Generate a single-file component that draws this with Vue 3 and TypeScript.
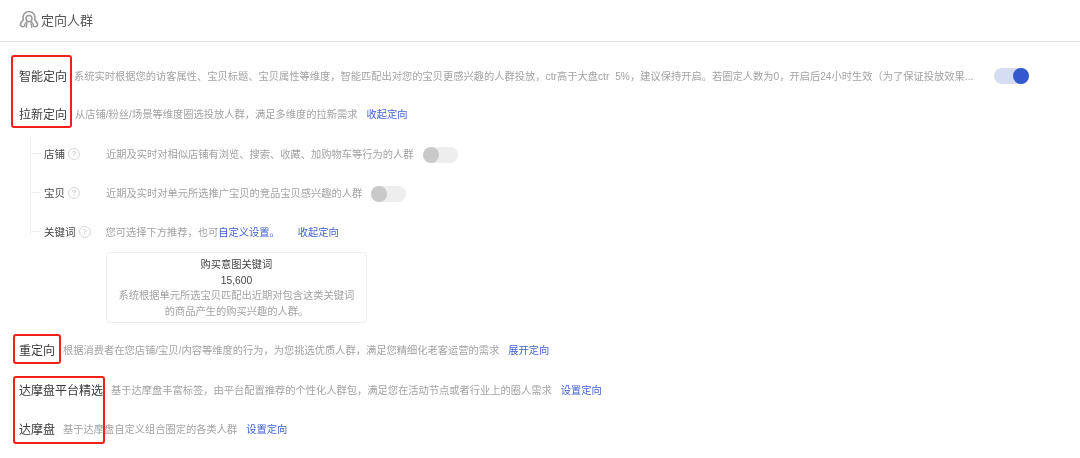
<script setup lang="ts">
interface SubRow { label: string; desc: string }
const subRows: SubRow[] = [
  { label: '店铺', desc: '近期及实时对相似店铺有浏览、搜索、收藏、加购物车等行为的人群' },
  { label: '宝贝', desc: '近期及实时对单元所选推广宝贝的竞品宝贝感兴趣的人群' },
]
</script>

<template>
  <div class="page">
    <header class="head">
      <svg class="logo" width="20" height="20" viewBox="0 0 20 20" fill="none" stroke="#999" stroke-width="1.5" stroke-linecap="round" stroke-linejoin="round">
        <path d="M4.4 9.6a6 6 0 1 1 11.2 0" />
        <path d="M7 8.4a3 3 0 0 1 6 0c0 1.9-1.4 3.3-3 3.3s-3-1.4-3-3.3z" />
        <path d="M4.4 9.6C2.6 11 1.5 12.6 1.3 15c.9 1.5 2.5 2 3.9 1.4.2-2 1.1-3.6 2.8-4.6" />
        <path d="M15.6 9.6c1.8 1.4 2.9 3 3.1 5.4-.9 1.5-2.5 2-3.9 1.4-.2-2-1.1-3.6-2.8-4.6" />
        <path d="M8 13.8c-.6 1-.8 2-.7 3.4M12 13.8c.6 1 .8 2 .7 3.4" />
      </svg>
      <span class="title">定向人群</span>
    </header>

    <section class="body">
      <div class="row first">
        <span class="label">智能定向</span>
        <span class="desc long">系统实时根据您的访客属性、宝贝标题、宝贝属性等维度，智能匹配出对您的宝贝更感兴趣的人群投放，ctr高于大盘ctr 5%，建议保持开启。若圈定人数为0，开启后24小时生效（为了保证投放效果...</span>
        <span class="toggle on"><i></i></span>
      </div>
      <div class="row">
        <span class="label">拉新定向</span>
        <span class="desc gap8">从店铺/粉丝/场景等维度圈选投放人群，满足多维度的拉新需求</span>
        <a class="link">收起定向</a>
      </div>

      <div class="tree">
        <div v-for="r in subRows" :key="r.label" class="sub">
          <span class="sub-label">{{ r.label }}</span>
          <span class="q">?</span>
          <span class="desc sub-desc">{{ r.desc }}</span>
          <span class="toggle off"><i></i></span>
        </div>
        <div class="sub">
          <span class="sub-label">关键词</span>
          <span class="q">?</span>
          <span class="desc kw-desc">您可选择下方推荐，也可<a class="link inline">自定义设置。</a></span>
          <a class="link kw-link">收起定向</a>
        </div>
      </div>

      <div class="card">
        <div class="card-title">购买意图关键词</div>
        <div class="card-num">15,600</div>
        <div class="card-text">系统根据单元所选宝贝匹配出近期对包含这类关键词<br />的商品产生的购买兴趣的人群。</div>
      </div>

      <div class="row re">
        <span class="label">重定向</span>
        <span class="desc gap8">根据消费者在您店铺/宝贝/内容等维度的行为，为您挑选优质人群，满足您精细化老客运营的需求</span>
        <a class="link">展开定向</a>
      </div>
      <div class="row pf">
        <span class="label">达摩盘平台精选</span>
        <span class="desc gap8">基于达摩盘丰富标签，由平台配置推荐的个性化人群包，满足您在活动节点或者行业上的圈人需求</span>
        <a class="link">设置定向</a>
      </div>
      <div class="row dm">
        <span class="label">达摩盘</span>
        <span class="desc gap8">基于达摩盘自定义组合圈定的各类人群</span>
        <a class="link">设置定向</a>
      </div>
    </section>

    <i class="red r1"></i>
    <i class="red r2"></i>
    <i class="red r3"></i>
  </div>
</template>

<style>
html, body { margin: 0; background: #fff; }
</style>

<style scoped>
.page {
  position: relative;
  width: 1080px;
  height: 458px;
  overflow: hidden;
  background: #fff;
  font-family: "Liberation Sans", "Noto Sans CJK SC", sans-serif;
  color: #333;
  text-spacing-trim: space-all;
  filter: blur(0.3px);
}
.head {
  display: flex;
  align-items: center;
  height: 39px;
  padding: 0 0 2px 19px;
  border-bottom: 1px solid #e8e8e8;
}
.logo { margin-right: 2px; }
.title { font-size: 13px; color: #555; }
.body { padding-left: 19px; }
.row {
  display: flex;
  align-items: center;
  height: 38px;
  white-space: nowrap;
}
.row.first { margin-top: 15px; }
.label { font-size: 12px; color: #3a3a3a; padding-bottom: 2px; }
.desc { font-size: 10.25px; color: #a3a3a3; padding-bottom: 2px; }
.long { flex: none; margin-left: 7px; width: 900px; overflow: hidden; word-spacing: 3px; }
.gap8 { margin-left: 8px; }
.link { font-size: 10.25px; color: #3f5fd0; margin-left: 9px; padding-bottom: 2px; }
.inline { margin-left: 0; padding-bottom: 0; }
.toggle {
  position: relative;
  flex: none;
  width: 35px;
  height: 16px;
  border-radius: 8px;
}
.toggle i {
  position: absolute;
  top: 0;
  width: 16px;
  height: 16px;
  border-radius: 50%;
}
.toggle.on { background: #d6ddf3; margin-left: 20px; }
.toggle.on i { right: 0; background: #3558cf; }
.toggle.off { background: #eeeeee; margin-left: 9px; }
.toggle.off i { left: 0; background: #c9c9c9; }

.tree {
  margin-left: 11px;
  padding-left: 13px;
  border-left: 1px solid #efefef;
  height: 100px;
  margin-top: -3px;
}
.sub {
  position: relative;
  display: flex;
  align-items: center;
  height: 39px;
  white-space: nowrap;
}
.sub::before {
  content: "";
  position: absolute;
  left: -13px;
  top: 18px;
  width: 10px;
  height: 1px;
  background: #efefef;
}
.tree .sub:first-child { margin-top: 5px; }
.sub-label { font-size: 10.5px; color: #444; padding-bottom: 2px; }
.q {
  flex: none;
  width: 10px;
  height: 10px;
  margin: 0 0 2px 3px;
  border: 1px solid #d8d8d8;
  border-radius: 50%;
  font-size: 8px;
  line-height: 10px;
  text-align: center;
  color: #bbb;
}
.sub-desc { margin-left: 26px; }
.kw-desc { margin-left: 15px; }
.kw-link { margin-left: 18px; }

.card {
  width: 259px;
  height: 65px;
  margin: 17px 0 0 87px;
  padding-top: 4px;
  border: 1px solid #f0f0f0;
  border-radius: 4px;
  text-align: center;
  line-height: 15.5px;
  font-size: 10.25px;
}
.card-title, .card-num { color: #444; }
.card-text { color: #a3a3a3; }

.row.re { margin-top: 8px; }
.row.pf { margin-top: 2px; }
.row.dm { margin-top: 1px; }

.red {
  position: absolute;
  box-sizing: border-box;
  border: 2.5px solid #f0201a;
  border-radius: 3px;
}
.r1 { left: 11px; top: 55px; width: 61px; height: 73px; }
.r2 { left: 13px; top: 334px; width: 48px; height: 30px; }
.r3 { left: 13px; top: 376px; width: 92px; height: 68px; }
</style>
